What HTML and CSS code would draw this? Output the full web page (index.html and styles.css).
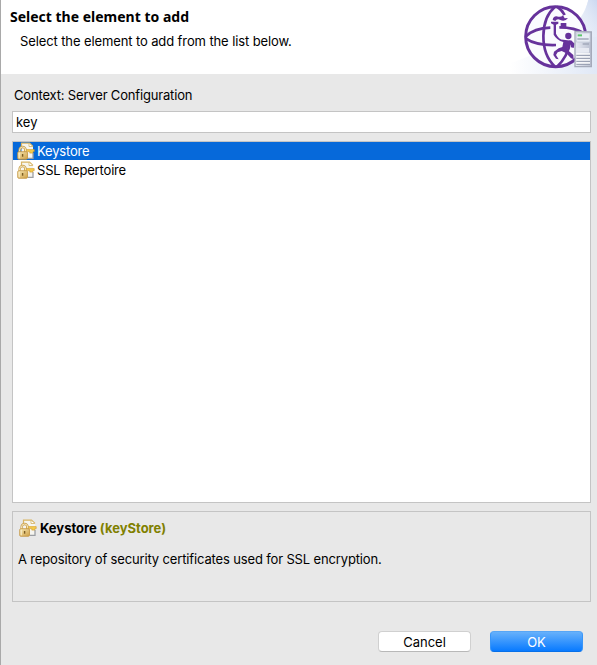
FILE: index.html
```html
<!DOCTYPE html>
<html lang="en">
<head>
<meta charset="utf-8">
<title>Select the element to add</title>
<link rel="stylesheet" href="styles.css">
</head>
<body>
<svg class="defs" aria-hidden="true">
  <defs>
    <linearGradient id="gold" x1="0" y1="0" x2="1" y2="1"><stop offset="0" stop-color="#f6e7b4"/><stop offset="1" stop-color="#cfa044"/></linearGradient>
    <symbol id="keystore" viewBox="0 0 18 18">
      <path d="M4.500 1h8l3.500 3.500v12H4.500z" fill="#f6f5ef"/>
      <path d="M4.500 5V1.200h8l3.500 3.300" fill="none" stroke="#d8b463" stroke-width="1.200"/>
      <path d="M12 1.500v3h3.500" fill="#fff" stroke="#d2b062" stroke-width=".8"/>
      <path d="M11 16.300h5V11" fill="none" stroke="#9c9fa4" stroke-width="1.300"/>
      <path d="M7.500 7.600h9.700v2h-1.400v1.500h-3V9.600H7.500z" fill="#f5cb4c" stroke="#d19b28" stroke-width=".6"/>
      <path d="M2.600 9.800V8a3 3 0 0 1 6 0v1.800" fill="none" stroke="#c9a050" stroke-width="2.300"/>
      <path d="M2.600 9.800V8a3 3 0 0 1 6 0v1.800" fill="none" stroke="#f8e9bc" stroke-width="1"/>
      <rect x=".7" y="9.700" width="9.800" height="7.600" rx="1.200" fill="url(#gold)" stroke="#c1933f" stroke-width=".8"/>
      <path d="M2.200 10.800v5.500" stroke="#fbf2d2"/>
      <path d="M5.600 12v2.700" stroke="#795b22" stroke-width="1.400"/>
    </symbol>
  </defs>
</svg>
<main class="dialog">
  <header class="header">
    <div class="heading">
      <h1 class="title">Select the element to add</h1>
      <p class="subtitle">Select the element to add from the list below.</p>
    </div>
    <svg class="logo" viewBox="0 0 261 222">
      <defs>
        <linearGradient id="sky" x1="0" y1="1" x2="1" y2="0"><stop offset="0" stop-color="#fff" stop-opacity="0"/><stop offset="1" stop-color="#cbd8f0"/></linearGradient>
        <linearGradient id="sky2" x1="0" y1="0" x2="1" y2="0"><stop offset="0" stop-color="#fff"/><stop offset="1" stop-color="#e0e8f6"/></linearGradient>
        <linearGradient id="tower" x1="0" y1="0" x2="1" y2="0"><stop offset="0" stop-color="#e9ecf4"/><stop offset="1" stop-color="#b9bfd0"/></linearGradient>
      </defs>
      <path d="M0 222H261V0H235Q205 120 0 190z" fill="url(#sky2)"/>
      <path d="M235 0h26v110H185Q220 60 235 0z" fill="url(#sky)"/>
      <circle cx="137" cy="110" r="90" fill="#fafbfe" stroke="#66329b" stroke-width="9"/>
      <g fill="none" stroke="#66329b" stroke-width="8">
        <path d="M135 20C90 58 87 155 135 200"/>
        <path d="M141 20Q157 31 164 45M181 122Q174 170 141 200"/>
        <path d="M48 109Q72 85 121 83M148 82Q195 82 222 100"/>
        <path d="M48 116Q78 137 138 135"/>
      </g>
      <g fill="#66329b">
        <path d="M128 60Q130 46 145 50Q153 52 159 46L164 55L174 54Q164 67 151 60Q141 55 136 63z"/>
        <path d="M123 65h22v6l-7 3v27q8 18 22 18l25 3 9 9-3 13-8-2v-8l-6-2-5 17 18 16 1 13-8-3-14-15-14-7-12 4-5 8 8 13-8-2-8-11 2-10 14-10 11-4 3-15q-20-6-29-22V74l-8-4z"/>
        <circle cx="175" cy="108" r="9.500"/>
        <path d="M152 69h17v13h-17z"/>
      </g>
      <path d="M195 94l49 2v104h-49z" fill="url(#tower)" stroke="#a5aaba" stroke-width="4"/>
      <path d="M199 99h41v27h-41z" fill="#e9edf5" stroke="#c0c6d5" stroke-width="2"/>
      <path d="M203 106h13" stroke="#5cc66a" stroke-width="6"/>
      <path d="M202 117h34M218 132h19" stroke="#a3a9bb" stroke-width="4"/>
      <path d="M199 144h38v14h-38z" fill="#e7eaf2"/>
      <path d="M199 162h41M199 171h41M199 180h41M199 189h41" stroke="#fff" stroke-width="4"/>
      <path d="M199 166h41M199 175h41M199 184h41M199 193h41" stroke="#9299ad" stroke-width="3"/>
    </svg>
  </header>
  <section class="content">
    <label class="context" for="filter">Context: Server Configuration</label>
    <input class="filter" id="filter" type="text" value="key">
    <ul class="list">
      <li class="row selected"><svg class="icon"><use href="#keystore"/></svg><span>Keystore</span></li>
      <li class="row"><svg class="icon"><use href="#keystore"/></svg><span>SSL Repertoire</span></li>
    </ul>
    <div class="details">
      <div class="details-title"><svg class="icon"><use href="#keystore"/></svg><b class="name">Keystore</b><b class="type">(keyStore)</b></div>
      <p class="description">A repository of security certificates used for SSL encryption.</p>
    </div>
    <div class="actions">
      <button class="button">Cancel</button>
      <button class="button primary">OK</button>
    </div>
  </section>
</main>
</body>
</html>
```
FILE: styles.css
```css
* { box-sizing: border-box; }
body { margin: 0; font: 13px/16px Inter, "Liberation Sans", sans-serif; color: #000; background: #e8e8e8; }
h1, p, ul { margin: 0; padding: 0; }
.defs { position: absolute; width: 0; height: 0; }
.dialog { height: 665px; border-left: 1px solid #a9a9a9; display: flex; flex-direction: column; overflow: hidden; }
.header { height: 74px; flex: none; background: #fff; display: flex; justify-content: space-between; }
.heading { padding: 8px 0 0 9px; white-space: nowrap; }
.title { font: bold 14px/18px "Noto Sans", sans-serif; }
.subtitle { margin: 7px 0 0 10px; letter-spacing: -0.11px; }
.logo { width: 87px; height: 74px; flex: none; }
.content { flex: 1; padding: 13px 6px 0 11px; display: flex; flex-direction: column; }
.context { padding-left: 2px; height: 24px; line-height: 17px; letter-spacing: -0.17px; }
.filter { width: 579px; height: 22px; border: 1px solid #c4c4c4; padding: 0 3px; font: inherit; background: #fff; outline: 0; color: #000; }
.list { width: 579px; height: 362px; margin-top: 8px; border: 1px solid #c4c4c4; background: #fff; list-style: none; }
.row { height: 19px; display: flex; align-items: center; gap: 2px; padding-left: 4px; letter-spacing: -0.17px; }
.row:first-child { height: 18px; }
.row:nth-child(2) { height: 20px; }
.selected { background: #0669da; color: #fff; }
.icon { width: 18px; height: 18px; flex: none; }
.details { width: 579px; height: 91px; margin-top: 8px; border: 1px solid #c4c4c4; padding: 7px 6px 0; }
.details-title { display: flex; align-items: center; gap: 3px; height: 18px; }
.type { color: #808000; }
.description { margin: 14px 0 0 -1px; letter-spacing: -0.145px; }
.actions { display: flex; gap: 19px; justify-content: flex-end; margin: 29px 8px 0 0; }
.button { width: 93px; height: 21px; padding: 0; border: 1px solid #d0d0d0; border-bottom-color: #b8b8b8; border-radius: 4px; background: #fff; font: inherit; color: #000; }
.primary { color: #fff; border-color: #57a6f6 #3895f8 #0870e8; background: linear-gradient(#67b1fb, #087aff); }
```
